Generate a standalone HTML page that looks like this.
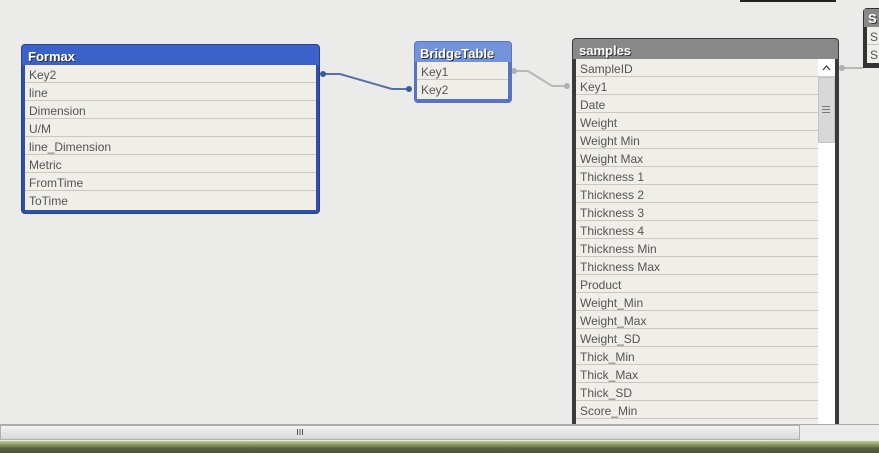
<!DOCTYPE html>
<html><head><meta charset="utf-8"><style>
*{margin:0;padding:0;box-sizing:border-box}
body{width:879px;height:453px;overflow:hidden;background:#ebebea;position:relative;font-family:"Liberation Sans",sans-serif}
.abs{position:absolute}
.row{position:absolute;left:0;right:0;height:18px;border-bottom:1px solid #c8c8c0;font-size:12px;color:#555;padding-left:4px;padding-top:2px;line-height:16px;background:#efeee8}
.hdr{position:absolute;color:#fff;font-weight:bold;font-size:13px;padding-left:6px;padding-top:3px;line-height:18px;text-shadow:1px 1px 0 #333}
</style></head><body>

<svg class="abs" style="left:0;top:0" width="879" height="453">
<path d="M323 74 L340 74 L392 89 L409 89" stroke="#5a6ea8" stroke-width="2" fill="none"/>
<circle cx="323" cy="74" r="3" fill="#3a5aa0"/><circle cx="409" cy="89" r="3" fill="#3a5aa0"/>
<path d="M514 71 L528 71 L552 86 L567 86" stroke="#b8b8b8" stroke-width="2" fill="none"/>
<circle cx="514" cy="71" r="3" fill="#b0b0b0"/><circle cx="567" cy="86" r="3" fill="#b0b0b0"/>
<path d="M841 68 L863 68" stroke="#b8b8b8" stroke-width="2" fill="none"/>
<circle cx="842" cy="68" r="3" fill="#b0b0b0"/>
</svg>

<div class="abs" style="left:740px;top:0;width:96px;height:2px;background:#222"></div>

<div class="abs" style="left:21px;top:44px;width:299px;height:170px;background:#2f4fa8;border-radius:4px;border:1px solid #2a4090"></div>
<div class="hdr" style="left:22px;top:45px;width:297px;height:20px;background:#3a62c8;border-radius:3px 3px 0 0">Formax</div>
<div class="abs" style="left:25px;top:65px;width:291px;height:145px;background:#efeee8">
<div class="row" style="top:0">Key2</div><div class="row" style="top:18px">line</div><div class="row" style="top:36px">Dimension</div><div class="row" style="top:54px">U/M</div><div class="row" style="top:72px">line_Dimension</div><div class="row" style="top:90px">Metric</div><div class="row" style="top:108px">FromTime</div><div class="row" style="top:126px;border:none">ToTime</div>
</div>

<div class="abs" style="left:414px;top:41px;width:98px;height:62px;background:#5874c0;border-radius:4px"></div>
<div class="hdr" style="left:415px;top:42px;width:96px;height:20px;background:#7393dc;border-radius:3px 3px 0 0;padding-left:5px">BridgeTable</div>
<div class="abs" style="left:417px;top:62px;width:91px;height:37px;background:#efeee8">
<div class="row" style="top:0">Key1</div><div class="row" style="top:18px;border:none">Key2</div>
</div>

<div class="abs" style="left:572px;top:38px;width:267px;height:400px;background:#3a3a3a;border-radius:4px 4px 0 0"></div>
<div class="hdr" style="left:573px;top:39px;width:265px;height:20px;background:#888;border-radius:3px 3px 0 0">samples</div>
<div class="abs" style="left:576px;top:59px;width:242px;height:370px;background:#efeee8;overflow:hidden">
<div class="row" style="top:0">SampleID</div><div class="row" style="top:18px">Key1</div><div class="row" style="top:36px">Date</div><div class="row" style="top:54px">Weight</div><div class="row" style="top:72px">Weight Min</div><div class="row" style="top:90px">Weight Max</div><div class="row" style="top:108px">Thickness 1</div><div class="row" style="top:126px">Thickness 2</div><div class="row" style="top:144px">Thickness 3</div><div class="row" style="top:162px">Thickness 4</div><div class="row" style="top:180px">Thickness Min</div><div class="row" style="top:198px">Thickness Max</div><div class="row" style="top:216px">Product</div><div class="row" style="top:234px">Weight_Min</div><div class="row" style="top:252px">Weight_Max</div><div class="row" style="top:270px">Weight_SD</div><div class="row" style="top:288px">Thick_Min</div><div class="row" style="top:306px">Thick_Max</div><div class="row" style="top:324px">Thick_SD</div><div class="row" style="top:342px">Score_Min</div><div class="row" style="top:360px">Score_Max</div>
</div>
<div class="abs" style="left:818px;top:59px;width:17px;height:370px;background:#fff"></div>
<svg class="abs" style="left:818px;top:59px" width="17" height="18"><path d="M5 11 L8.5 7 L12 11" stroke="#444" stroke-width="1.3" fill="none"/><line x1="0" y1="17.5" x2="17" y2="17.5" stroke="#ccc"/></svg>
<div class="abs" style="left:818px;top:77px;width:17px;height:66px;background:#d8d8d8;border:1px solid #c4c4c4"></div>
<div class="abs" style="left:822px;top:106px;width:8px;height:7px;border-top:1px solid #777;border-bottom:1px solid #777"><div style="margin-top:2px;height:1px;background:#777"></div></div>

<div class="abs" style="left:863px;top:8px;width:20px;height:60px;background:#333;border-radius:4px 0 0 0"></div>
<div class="hdr" style="left:864px;top:9px;width:20px;height:18px;background:#888;padding-left:4px;padding-top:1px">S</div>
<div class="abs" style="left:867px;top:27px;width:14px;height:36px;background:#efeee8">
<div class="row" style="top:0;padding-left:3px">S</div><div class="row" style="top:18px;padding-left:3px;border:none">S</div>
</div>

<div class="abs" style="left:0;top:424px;width:879px;height:18px;background:#ececec;border-top:1px solid #aaa"></div>
<div class="abs" style="left:0;top:425px;width:800px;height:15px;background:linear-gradient(#f4f4f4,#d8d8d8);border:1px solid #b0b0b0"></div>
<svg class="abs" style="left:296px;top:428px" width="8" height="8"><path d="M1.5 1V7M4 1V7M6.5 1V7" stroke="#555" stroke-width="1"/></svg>
<div class="abs" style="left:0;top:441px;width:879px;height:12px;background:linear-gradient(#c0c89a,#8e9a68 30%,#5a6440 60%,#4a5236)"></div>
</body></html>
